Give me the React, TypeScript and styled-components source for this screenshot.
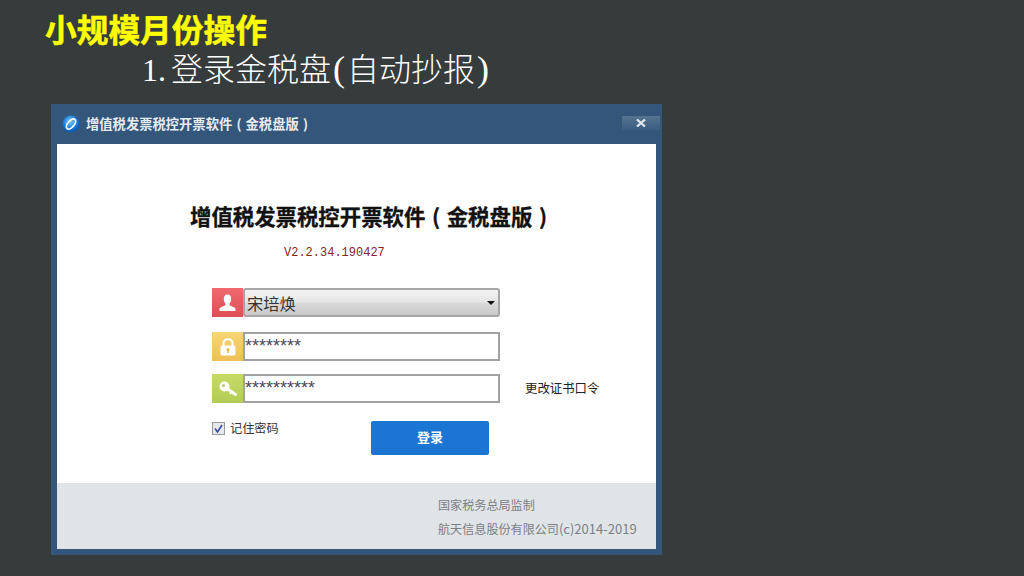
import React from "react";
import styled, { createGlobalStyle } from "styled-components";

const CJK = `"Noto Sans CJK SC", "Liberation Sans", sans-serif`;

const Global = createGlobalStyle`
  html, body {
    margin: 0;
    padding: 0;
    background: #363b3c;
    font-family: ${CJK};
  }
`;

const Slide = styled.div`
  width: 1024px;
  height: 576px;
  overflow: hidden;
  background: #363b3c;
  box-sizing: border-box;
  padding: 6px 0 0 51px;
`;

const Heading = styled.h1`
  margin: 0 0 0 -6px;
  height: 43px;
  font-size: 31.7px;
  line-height: 44px;
  font-weight: 700;
  color: #ffff00;
  -webkit-text-stroke: 0.5px #ffff00;
`;

const SubHeading = styled.h2`
  margin: 0 0 0 91px;
  height: 55px;
  font-size: 32px;
  line-height: 36px;
  font-weight: 300;
  color: #ffffff;
  white-space: nowrap;
`;

const Numeral = styled.span`
  font-family: "Liberation Serif", serif;
  font-size: 32px;
  margin-right: 5px;
`;

const SubParen = styled.span`
  font-family: "Liberation Serif", serif;
  font-size: 36px;
  display: inline-block;
  width: 16px;
  text-align: center;
`;

/* half-width bracket sitting in a full-width cell, as the app's font draws it */
const Bracket = styled.span`
  display: inline-block;
  width: 1em;
  text-align: center;
`;

const Dialog = styled.div`
  width: 611px;
  height: 451px;
  display: flex;
  flex-direction: column;
  background: #34567a;
  box-sizing: border-box;
  padding: 0 6px 6px;
`;

const TitleBar = styled.div`
  height: 40px;
  flex: none;
  display: flex;
  align-items: center;
  gap: 6px;
  margin-right: -4px;
  padding-left: 5px;
`;

const WindowTitle = styled.span`
  flex: 1;
  font-size: 13.3px;
  line-height: 18px;
  margin-top: -1px;
  font-weight: 700;
  color: #e6ebef;
  white-space: nowrap;
`;

const CloseButton = styled.div`
  width: 38px;
  height: 14px;
  margin-top: -2px;
  display: flex;
  align-items: center;
  justify-content: center;
  background: linear-gradient(#557490, #3a5d80);
`;

const Body = styled.div`
  flex: 1;
  background: #ffffff;
  display: flex;
  flex-direction: column;
`;

const BodyMain = styled.div`
  height: 339px;
  flex: none;
  box-sizing: border-box;
  padding-top: 56px;
`;

const AppTitle = styled.div`
  margin-left: 133px;
  height: 32px;
  font-size: 21.4px;
  line-height: 32px;
  font-weight: 700;
  color: #111111;
  white-space: nowrap;
  -webkit-text-stroke: 0.3px #111111;
`;

const Version = styled.div`
  margin: 11px 0 0 227px;
  height: 20px;
  font-family: "Liberation Mono", monospace;
  font-size: 12px;
  line-height: 20px;
  color: #8c2323;
`;

const Form = styled.div`
  margin: 25px 0 0 155px;
  display: flex;
  flex-direction: column;
  gap: 13px;
`;

const Row = styled.div`
  display: flex;
  align-items: stretch;
  height: 29px;
  &:first-child {
    margin-bottom: 2px;
  }
`;

const IconTile = styled.div<{ $from: string; $to: string }>`
  width: 31px;
  flex: none;
  display: flex;
  align-items: center;
  justify-content: center;
  background: linear-gradient(${(p) => p.$from}, ${(p) => p.$to});
`;

const Select = styled.div`
  width: 257px;
  box-sizing: border-box;
  display: flex;
  align-items: center;
  justify-content: space-between;
  padding: 0 3px 0 2px;
  border: 2px solid #a6a6a6;
  border-radius: 3px;
  background: linear-gradient(#f2f2f2 0%, #e5e5e5 48%, #dadada 52%, #c9c9c9 100%);
  font-size: 16.3px;
  color: #333333;
`;

const Caret = styled.span`
  width: 0;
  height: 0;
  border-left: 4px solid transparent;
  border-right: 4px solid transparent;
  border-top: 4px solid #111111;
`;

const Field = styled.div`
  width: 257px;
  box-sizing: border-box;
  padding: 3px 0 0;
  border: 2px solid #a2a2a2;
  background: #ffffff;
  font-family: "Liberation Sans", sans-serif;
  font-size: 18px;
  line-height: 18px;
  color: #4a4a5c;
`;

const SideLink = styled.span`
  margin-left: 25px;
  font-size: 12.4px;
  line-height: 29px;
  color: #222222;
  white-space: nowrap;
`;

const ActionRow = styled.div`
  margin-top: 5px;
  display: flex;
  align-items: flex-start;
`;

const Remember = styled.label`
  width: 159px;
  display: flex;
  align-items: center;
  gap: 5px;
  font-size: 12.2px;
  line-height: 14px;
  color: #333333;
`;

const CheckBox = styled.span`
  width: 13px;
  height: 13px;
  flex: none;
  box-sizing: border-box;
  display: flex;
  align-items: center;
  justify-content: center;
  border: 1px solid #9a9a9a;
  background: #e6e8ee;
`;

const LoginButton = styled.button`
  width: 118px;
  height: 34px;
  padding: 0 0 3px;
  border: none;
  border-radius: 2px;
  background: #1b75d3;
  color: #ffffff;
  font-family: ${CJK};
  font-size: 13px;
  font-weight: 700;
`;

const Footer = styled.div`
  flex: 1;
  background: #e1e4e7;
  box-sizing: border-box;
  padding: 13px 0 0 381px;
  display: flex;
  flex-direction: column;
  gap: 6px;
`;

const FooterLine = styled.div`
  height: 18px;
  font-size: 12.1px;
  line-height: 18px;
  color: #7b8084;
  white-space: nowrap;
`;

const FooterLatin = styled.span`
  font-size: 13px;
`;

const Logo = () => (
  <svg width="18" height="18" viewBox="0 0 18 18">
    <defs>
      <radialGradient id="logoBall" cx="45%" cy="35%" r="70%">
        <stop offset="0%" stopColor="#7fcdf7" />
        <stop offset="60%" stopColor="#1478d8" />
        <stop offset="100%" stopColor="#0b4ea0" />
      </radialGradient>
    </defs>
    <circle cx="9" cy="9" r="8.5" fill="url(#logoBall)" />
    <ellipse
      cx="9"
      cy="9"
      rx="6"
      ry="3.2"
      fill="none"
      stroke="#ffffff"
      strokeWidth="1.7"
      transform="rotate(-50 9 9)"
    />
  </svg>
);

const CloseIcon = () => (
  <svg width="10" height="8" viewBox="0 0 10 8">
    <path d="M1 0.5 L9 7.5 M9 0.5 L1 7.5" stroke="#e4e8ec" strokeWidth="2.2" />
  </svg>
);

const UserIcon = () => (
  <svg width="17" height="18" viewBox="0 0 17 18">
    <path
      d="M8.5 0.5 C5.8 0.5 4.8 2.6 4.8 5 C4.8 7 5.6 8.6 6.5 9.6 L6.5 11.2 C4.5 12.4 1.5 13 0.5 14.6 L0.5 17 L16.5 17 L16.5 14.6 C15.5 13 12.5 12.4 10.5 11.2 L10.5 9.6 C11.4 8.6 12.2 7 12.2 5 C12.2 2.6 11.2 0.5 8.5 0.5 Z"
      fill="#ffffff"
    />
  </svg>
);

const LockIcon = () => (
  <svg width="16" height="18" viewBox="0 0 16 18">
    <path
      d="M3.5 8 L3.5 5.2 C3.5 2.6 5.4 1.2 8 1.2 C10.6 1.2 12.5 2.6 12.5 5.2 L12.5 8"
      fill="none"
      stroke="#ffffff"
      strokeWidth="2"
    />
    <rect x="0.5" y="7.5" width="15" height="10" rx="1.5" fill="#ffffff" />
    <circle cx="8" cy="11.5" r="1.6" fill="#e9b94e" />
    <rect x="7.2" y="12" width="1.6" height="3" fill="#e9b94e" />
  </svg>
);

const KeyIcon = () => (
  <svg width="18" height="16" viewBox="0 0 18 16">
    <path d="M8 7.5 L16.5 13.5" stroke="#ffffff" strokeWidth="3" strokeLinecap="round" />
    <path d="M12.5 10.5 L11 13" stroke="#ffffff" strokeWidth="2" />
    <circle cx="5.5" cy="5.5" r="5" fill="#ffffff" />
    <circle cx="4.5" cy="4.5" r="1.5" fill="#b5cf5a" />
  </svg>
);

const CheckIcon = () => (
  <svg width="9" height="9" viewBox="0 0 9 9">
    <path d="M1 4.5 L3.5 8 L8 1" fill="none" stroke="#3d4f9c" strokeWidth="1.6" />
  </svg>
);

export default function App() {
  return (
    <>
      <Global />
      <Slide>
        <Heading>小规模月份操作</Heading>
        <SubHeading>
          <Numeral>1.</Numeral>登录金税盘<SubParen>(</SubParen>自动抄报<SubParen>)</SubParen>
        </SubHeading>
        <Dialog>
          <TitleBar>
            <Logo />
            <WindowTitle>
              增值税发票税控开票软件<Bracket>(</Bracket>金税盘版<Bracket>)</Bracket>
            </WindowTitle>
            <CloseButton>
              <CloseIcon />
            </CloseButton>
          </TitleBar>
          <Body>
            <BodyMain>
              <AppTitle>
                增值税发票税控开票软件<Bracket>(</Bracket>金税盘版<Bracket>)</Bracket>
              </AppTitle>
              <Version>V2.2.34.190427</Version>
              <Form>
                <Row>
                  <IconTile $from="#ef6a6f" $to="#dd4f55">
                    <UserIcon />
                  </IconTile>
                  <Select>
                    宋培焕
                    <Caret />
                  </Select>
                </Row>
                <Row>
                  <IconTile $from="#f7d674" $to="#eebf55">
                    <LockIcon />
                  </IconTile>
                  <Field>********</Field>
                </Row>
                <Row>
                  <IconTile $from="#c6db66" $to="#b2cc55">
                    <KeyIcon />
                  </IconTile>
                  <Field>**********</Field>
                  <SideLink>更改证书口令</SideLink>
                </Row>
                <ActionRow>
                  <Remember>
                    <CheckBox>
                      <CheckIcon />
                    </CheckBox>
                    记住密码
                  </Remember>
                  <LoginButton>登录</LoginButton>
                </ActionRow>
              </Form>
            </BodyMain>
            <Footer>
              <FooterLine>国家税务总局监制</FooterLine>
              <FooterLine>
                航天信息股份有限公司<FooterLatin>(c)2014-2019</FooterLatin>
              </FooterLine>
            </Footer>
          </Body>
        </Dialog>
      </Slide>
    </>
  );
}
